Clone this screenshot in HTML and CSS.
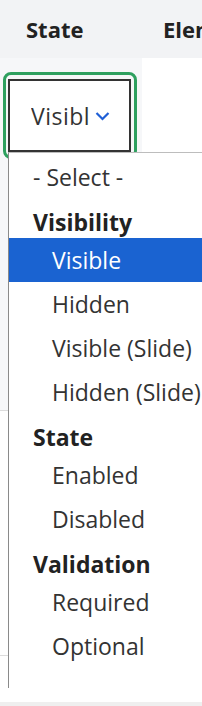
FILE: index.html
```html
<!DOCTYPE html>
<html lang="en">
<head>
    <meta charset="UTF-8">
    <meta name="viewport" content="width=device-width, initial-scale=1.0">
    <title>State select</title>

    <link rel="stylesheet" href="styles.css">
</head>
<body>

    <div class="grid">
        <div class="thead">
            <div class="th th-state">State</div>
            <div class="th th-elem">Element</div>
        </div>

        <div class="trow trow-first">
            <div class="td td-state">
                <div class="focus-ring">
                    <div class="select">
                        <span class="select-value">Visible</span>
                        <svg class="chevron" width="15" height="10" viewBox="0 0 15 10">
                            <path d="M1.5 2 L7.5 8 L13.5 2" fill="none" stroke="#1f5fd6" stroke-width="2.2"/>
                        </svg>
                    </div>
                </div>
            </div>
            <div class="td"></div>
        </div>
        <div class="trow trow-second"></div>
        <div class="trow trow-third"></div>

        <!-- open list of the select, over the table -->
        <ul class="dropdown">
            <li class="opt opt-placeholder">- Select -</li>
            <li class="grp">Visibility</li>
            <li class="opt selected">Visible</li>
            <li class="opt">Hidden</li>
            <li class="opt">Visible (Slide)</li>
            <li class="opt">Hidden (Slide)</li>
            <li class="grp">State</li>
            <li class="opt">Enabled</li>
            <li class="opt">Disabled</li>
            <li class="grp">Validation</li>
            <li class="opt">Required</li>
            <li class="opt">Optional</li>
        </ul>
    </div>

</body>
</html>
```

FILE: styles.css
```css
html{
    background: #efefef;
}

body{
    margin: 0;
    overflow: hidden;
    font-family: "Open Sans", "Noto Sans", sans-serif;
    color: #333;
}

.grid{
    position: relative;
    width: 202px;
    background: #fff;
}

.thead{
    height: 58px;
    display: flex;
    align-items: center;
    background: #f2f3f5;
    overflow: hidden;
}

.th{
    font-size: 22px;
    font-weight: bold;
    color: #222;
    white-space: nowrap;
}

.th-state{
    width: 163px;
    flex-shrink: 0;
    padding-left: 26px;
    box-sizing: border-box;
}

.th-elem{
    flex-shrink: 0;
}

.trow{
    display: flex;
    border-bottom: 1px solid #dcdcdc;
}

.trow-first{
    height: 352px;
}

.trow-second{
    height: 244px;
}

.trow-third{
    height: 46px;
    border-bottom: none;
}

.td-state{
    width: 142px;
    flex-shrink: 0;
    padding-top: 14px;
    box-sizing: border-box;
    background: #f6f7f9;
}

.focus-ring{
    width: 134px;
    margin-left: 3px;
    padding: 4px 3px 4px 2px;
    border: 3px solid #2ea05f;
    border-radius: 8px;
    box-sizing: border-box;
}

.select{
    height: 73px;
    display: flex;
    align-items: center;
    padding-left: 21px;
    border: 2px solid #333;
    background: #fff;
    box-sizing: border-box;
}

.select-value{
    width: 58px;
    overflow: hidden;
    white-space: nowrap;
    font-size: 23px;
    letter-spacing: 0.5px;
    color: #333;
}

.chevron{
    margin-left: 6px;
}

.dropdown{
    position: absolute;
    left: 8px;
    top: 152px;
    width: 230px;
    height: 536px;
    margin: 0;
    padding: 2px 0 0 0;
    list-style: none;
    background: #fff;
    border-top: 1px solid #bdbdbd;
    border-left: 1px solid #8a8a8a;
    box-sizing: border-box;
    font-size: 23px;
}

.opt{
    height: 44px;
    line-height: 44px;
    padding-left: 43px;
    white-space: nowrap;
}

.opt-placeholder{
    padding-left: 24px;
}

.opt.selected{
    background: #1a63d1;
    color: #fff;
}

.grp{
    height: 39px;
    padding-top: 7px;
    padding-left: 24px;
    line-height: 32px;
    box-sizing: border-box;
    font-weight: bold;
    color: #222;
}
```
